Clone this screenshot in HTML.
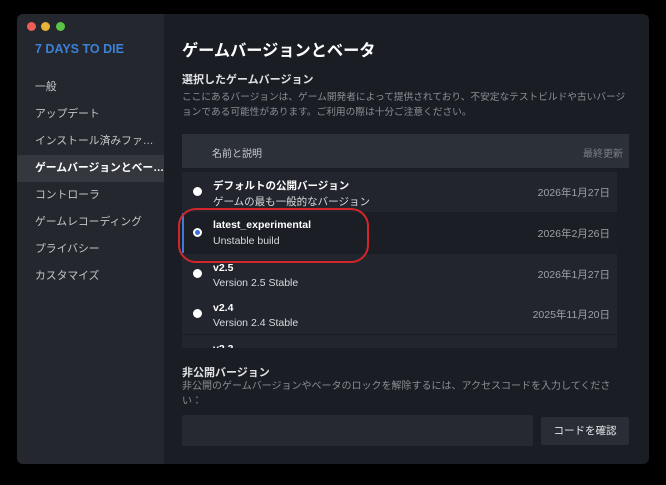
<!DOCTYPE html>
<html><head><meta charset="utf-8"><style>
*{margin:0;padding:0;box-sizing:border-box}
body{width:666px;height:485px;background:#000;font-family:"Liberation Sans","Noto Sans CJK JP",sans-serif;position:relative;overflow:hidden;color:#dcdedf}
.win{position:absolute;left:17px;top:14px;width:632px;height:450px;background:#1a1d24;border-radius:6px;overflow:hidden}
.side{position:absolute;left:0;top:0;width:147px;height:450px;background:#24272e}
.dot{position:absolute;top:8px;width:9px;height:9px;border-radius:50%}
.logo{position:absolute;left:18px;top:28px;font-weight:bold;font-size:12.5px;color:#3c80d8}
.nav{position:absolute;left:0;width:147px;height:27px;font-size:10.8px;color:#c4c6c9;padding-left:18px;line-height:27px;white-space:nowrap;overflow:hidden}
.nav.sel{background:#34373e;color:#fff;font-weight:bold}
.abs{position:absolute}
.row{position:absolute;left:165px;width:435px;height:40px;background:#22252d}
.radio{position:absolute;left:11px;top:15px;width:9px;height:9px;border-radius:50%;background:#fff}
.t1{position:absolute;left:31px;top:6px;font-size:10.5px;font-weight:bold;color:#fff}
.t2{position:absolute;left:31px;top:22px;font-size:10.5px;color:#d8dadc}
.dt{position:absolute;right:7px;top:13px;font-size:10.5px;color:#9ea1a5}
</style></head><body>
<div class="win">
<div class="side">
<div class="dot" style="left:10px;background:#ec5f57"></div>
<div class="dot" style="left:24px;background:#e8b13a"></div>
<div class="dot" style="left:39px;background:#5bc446"></div>
<div class="logo">7 DAYS TO DIE</div>
<div class="nav" style="top:60px">一般</div>
<div class="nav" style="top:87px">アップデート</div>
<div class="nav" style="top:114px">インストール済みファ…</div>
<div class="nav sel" style="top:141px">ゲームバージョンとベー…</div>
<div class="nav" style="top:168px">コントローラ</div>
<div class="nav" style="top:195px">ゲームレコーディング</div>
<div class="nav" style="top:222px">プライバシー</div>
<div class="nav" style="top:249px">カスタマイズ</div>
</div>
<div class="abs" style="left:165px;top:23px;font-size:16.2px;font-weight:bold;color:#fff">ゲームバージョンとベータ</div>
<div class="abs" style="left:165px;top:57px;font-size:11px;font-weight:bold;color:#e0e2e4">選択したゲームバージョン</div>
<div class="abs" style="left:165px;top:76px;width:452px;font-size:9.7px;line-height:15px;color:#8b8e93">ここにあるバージョンは、ゲーム開発者によって提供されており、不安定なテストビルドや古いバージョンである可能性があります。ご利用の際は十分ご注意ください。</div>
<div class="abs" style="left:165px;top:120px;width:447px;height:34px;background:#2c3039">
<div class="abs" style="left:30px;top:11px;font-size:10px;color:#c8cacc">名前と説明</div>
<div class="abs" style="right:6px;top:11px;font-size:10px;color:#7d8085">最終更新</div></div>
<div class="abs" style="left:165px;top:158px;width:438px;height:176px;overflow:hidden">
<div class="row" style="left:0;top:0"><div class="radio"></div><div class="t1">デフォルトの公開バージョン</div><div class="t2">ゲームの最も一般的なバージョン</div><div class="dt">2026年1月27日</div></div>
<div class="row" style="left:0;top:41px;background:#1b1e25;border-left:2px solid #3a7bd5"><div class="radio" style="left:9px;border:2px solid #fff;background:#3a6fe0"></div><div class="t1" style="left:29px">latest_experimental</div><div class="t2" style="left:29px">Unstable build</div><div class="dt">2026年2月26日</div></div>
<div class="row" style="left:0;top:82px"><div class="radio"></div><div class="t1" style="top:8px">v2.5</div><div class="t2" style="top:23px">Version 2.5 Stable</div><div class="dt">2026年1月27日</div></div>
<div class="row" style="left:0;top:122px"><div class="radio"></div><div class="t1" style="top:8px">v2.4</div><div class="t2" style="top:23px">Version 2.4 Stable</div><div class="dt">2025年11月20日</div></div>
<div class="row" style="left:0;top:163px"><div class="t1" style="top:8px">v2.3</div></div>
<div class="abs" style="left:438px;top:3px;width:4px;height:28px;background:#4a4e56;border-radius:2px"></div>
</div>
<div class="abs" style="left:161px;top:194px;width:191px;height:55px;border:2.5px solid #d3262a;border-radius:18px"></div>
<div class="abs" style="left:165px;top:350px;font-size:11px;font-weight:bold;color:#e0e2e4">非公開バージョン</div>
<div class="abs" style="left:165px;top:365px;width:438px;font-size:10px;line-height:15px;color:#8b8e93">非公開のゲームバージョンやベータのロックを解除するには、アクセスコードを入力してください：</div>
<div class="abs" style="left:165px;top:401px;width:351px;height:31px;background:#262930;border-radius:2px"></div>
<div class="abs" style="left:524px;top:403px;width:88px;height:28px;background:#2a2d35;border-radius:2px;font-size:10.5px;color:#e4e6e8;text-align:center;line-height:28px">コードを確認</div>
</div>
</body></html>
